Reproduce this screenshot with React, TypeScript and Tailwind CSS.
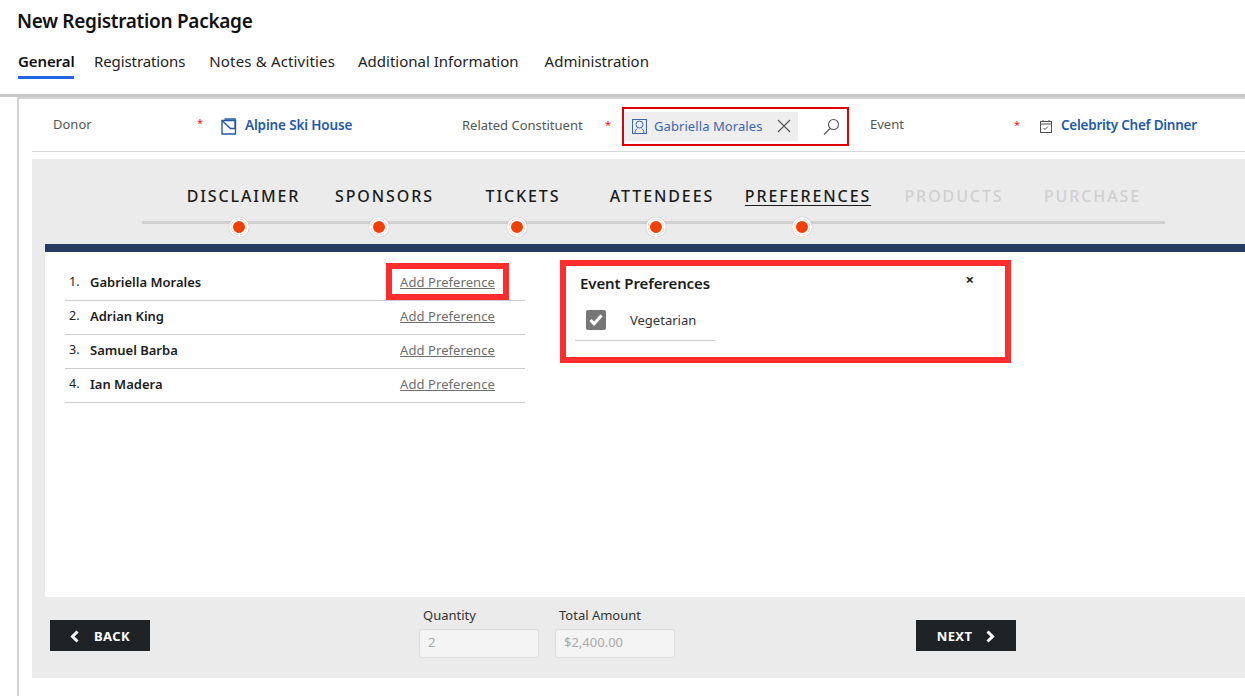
const steps = [
  { label: "DISCLAIMER", width: "w-[141px]", dotCls: "mr-[9px]", cls: "text-[#1c1c1c]" },
  { label: "SPONSORS", width: "w-[141px]", dotCls: "mr-[11px]", cls: "text-[#1c1c1c]" },
  { label: "TICKETS", width: "w-[136px]", dotCls: "mr-[12px]", cls: "text-[#1c1c1c]" },
  { label: "ATTENDEES", width: "w-[142px]", dotCls: "mr-[12px]", cls: "text-[#1c1c1c]" },
  { label: "PREFERENCES", width: "w-[150px]", dotCls: "mr-[12px]", cls: "text-[#1c1c1c] underline underline-offset-[3px]" },
  { label: "PRODUCTS", width: "w-[142px]", dotCls: "", cls: "text-[#d0d0d0] font-bold" },
  { label: "PURCHASE", width: "w-[135px]", dotCls: "", cls: "text-[#d0d0d0] font-bold" },
];

const attendees = ["Gabriella Morales", "Adrian King", "Samuel Barba", "Ian Madera"];

function AccountIcon() {
  return (
    <svg width="16" height="17" viewBox="0 0 16 17" fill="none" stroke="#2458a8" strokeWidth="1.4" className="shrink-0">
      <path d="M1 2.500h13.500v13.500h-13.500z" />
      <path d="M1 2.500l8.500 8h5" />
      <path d="M3.500 1h10.500v9.500" />
    </svg>
  );
}

function ContactIcon() {
  return (
    <svg width="15" height="15" viewBox="0 0 15 15" fill="none" stroke="#3a66ad" strokeWidth="1" className="shrink-0">
      <rect x="0.500" y="0.500" width="14" height="14" />
      <circle cx="7.500" cy="5.500" r="3.500" />
      <path d="M3 14.500c0-3 1.200-4.300 2.500-5.300M12 14.500c0-3-1.200-4.300-2.500-5.300" />
    </svg>
  );
}

function CalendarIcon() {
  return (
    <svg width="12" height="13" viewBox="0 0 12 13" fill="none" stroke="#505050" strokeWidth="1" className="shrink-0">
      <rect x="0.500" y="1.500" width="11" height="11" />
      <path d="M0.500 4h11M3 0v2M9 0v2" />
      <path d="M3.500 8l1.500 1.500 3-3" />
    </svg>
  );
}

function Chevron({ dir }: { dir: "left" | "right" }) {
  return (
    <svg width="9" height="13" viewBox="0 0 9 13" fill="none" stroke="#fff" strokeWidth="3">
      {dir === "left" ? <path d="M7.500 1.500L2.500 6.500l5 5" /> : <path d="M1.500 1.500l5 5-5 5" />}
    </svg>
  );
}

export default function App() {
  return (
    <div className="h-[696px] w-[1245px] overflow-hidden bg-white font-['Noto_Sans',sans-serif] text-[#222]">
      {/* header */}
      <div className="h-[97px] border-b-[3px] border-[#c8c8c8] pl-[17px]">
        <h1 className="pt-[8px] text-[19px] leading-[26px] font-semibold tracking-[-0.3px] text-[#111]">New Registration Package</h1>
        <div className="mt-[14px] ml-[1px] flex text-[15px] leading-[26px] text-[#222]">
          <div className="h-[31px] w-[56px] border-b-[3px] border-[#2266e3] font-semibold tracking-[-0.1px] text-[#111]">General</div>
          <div className="ml-[20px] tracking-[-0.1px]">Registrations</div>
          <div className="ml-[24px] tracking-[0.16px]">Notes &amp; Activities</div>
          <div className="ml-[23px]">Additional Information</div>
          <div className="ml-[26px]">Administration</div>
        </div>
      </div>

      {/* form area */}
      <div className="ml-[17px] h-[599px] border-t-2 border-l-2 border-[#d4d4d4]">
        <div className="ml-[13px] flex h-[53px] items-center border-b border-[#d8d8d8] pt-[2px] text-[13px]">
          <div className="flex w-[189px] pl-[21px]">
            <span className="w-[144px] text-[#555] -translate-y-[1px]">Donor</span>
            <span className="text-[11px] text-[#e81123] -translate-y-[1px]">*</span>
          </div>
          <div className="flex w-[241px] items-center gap-[8px]">
            <AccountIcon />
            <span className="text-[13.500px] font-semibold text-[#2458a8] tracking-[-0.15px] -translate-y-[1px]">Alpine Ski House</span>
          </div>
          <span className="w-[143px] text-[#555]">Related Constituent</span>
          <span className="w-[17px] text-[11px] text-[#e81123] -translate-y-[1px]">*</span>
          <div className="flex h-[39px] w-[227px] items-center border-2 border-[#e00000] pl-[1px]">
            <div className="flex h-[29px] w-[173px] items-center bg-[#eeeeee] pl-[7px] text-[#3a66ad]">
              <ContactIcon />
              <span className="ml-[7px] tracking-[0.08px] translate-y-[1px]">Gabriella Morales</span>
              <svg width="14" height="14" viewBox="0 0 14 14" stroke="#555" strokeWidth="1.100" className="ml-[14px]">
                <path d="M1 1l12 12M13 1L1 13" />
              </svg>
            </div>
            <svg width="17" height="17" viewBox="0 0 17 17" fill="none" stroke="#555" strokeWidth="1.100" className="ml-[25px]">
              <circle cx="10.500" cy="6.500" r="5" />
              <path d="M7 10.500L1 16.500" />
            </svg>
          </div>
          <span className="ml-[21px] w-[144px] text-[#555] -translate-y-[1px]">Event</span>
          <span className="w-[26px] text-[11px] text-[#e81123] -translate-y-[1px]">*</span>
          <CalendarIcon />
          <span className="ml-[9px] text-[13.500px] font-semibold text-[#2458a8] tracking-[-0.25px] -translate-y-[1px]">Celebrity Chef Dinner</span>
        </div>

        {/* wizard panel */}
        <div className="mt-[7px] ml-[13px] h-[519px] bg-[#ebebeb] pl-[13px]">
          <div className="relative h-[85px]">
            <div className="absolute top-[62px] left-[97px] h-[3px] w-[1023px] bg-[#d0d0d0]" />
            <div className="relative flex pl-[128px]">
              {steps.map((step) => (
                <div key={step.label} className={`flex flex-col items-center ${step.width}`}>
                  <span className={`mt-[26px] text-[16px] leading-[22px] font-medium tracking-[1.900px] whitespace-nowrap ${step.cls}`}>
                    {step.label}
                  </span>
                  {step.dotCls && (
                    <span className={`mt-[10px] flex h-[20px] w-[20px] items-center justify-center rounded-full border-2 border-white bg-[#f04008] shadow-[0_0_1px_#999] ring-2 ring-inset ring-white ${step.dotCls}`} />
                  )}
                </div>
              ))}
            </div>
          </div>
          <div className="h-[8px] bg-[#253a60]" />

          <div className="flex h-[345px] bg-white">
            {/* attendee list */}
            <div className="ml-[20px] w-[460px] pt-[15px]">
              {attendees.map((name, i) => (
                <div key={name} className="relative flex h-[34px] items-center border-b border-[#cccccc] pb-[2px] pl-[4px] text-[13px]">
                  <span className="w-[21px] text-[12.500px] text-[#222]">{i + 1}.</span>
                  <span className="font-semibold text-[#1c1c1c]">{name}</span>
                  <a className="absolute left-[335px] tracking-[0.08px] text-[#6e6e6e] underline">Add Preference</a>
                  {i === 0 && (
                    <div className="absolute -top-[4px] left-[321px] h-[37px] w-[123px] border-[6px] border-[#ff2d2d]" />
                  )}
                </div>
              ))}
            </div>

            {/* preferences popup */}
            <div className="mt-[8px] ml-[35px] h-[103px] w-[451px] border-[6px] border-[#ff2d2d] pl-[9px]">
              <div className="flex justify-between pr-[31px] pl-[5px]">
                <span className="pt-[5px] text-[15px] leading-[24px] font-semibold tracking-[-0.1px] text-[#1c1c1c]">Event Preferences</span>
                <span className="text-[15px] leading-[26px] font-bold text-[#222]">×</span>
              </div>
              <div className="flex h-[46px] w-[140px] items-center border-b border-[#cccccc] pt-[4px] pl-[11px] text-[13px]">
                <span className="flex h-[20px] w-[20px] items-center justify-center rounded-[2px] bg-[#777777]">
                  <svg width="14" height="12" viewBox="0 0 14 12" fill="none" stroke="#fff" strokeWidth="3">
                    <path d="M1.500 6l3.500 3.800L12.500 1.500" />
                  </svg>
                </span>
                <span className="ml-[24px] text-[#333] translate-y-[1px]">Vegetarian</span>
              </div>
            </div>
          </div>

          {/* footer */}
          <div className="flex h-[81px] pt-[23px]">
            <button className="ml-[5px] flex h-[31px] w-[100px] items-center justify-center gap-[15px] bg-[#1e2224] pt-[2px] text-[13px] font-bold tracking-[0.4px] text-white">
              <Chevron dir="left" />
              BACK
            </button>
            <div className="-mt-[14px] ml-[269px] w-[136px]">
              <div className="pl-[4px] text-[13px] leading-[18px] text-[#333]">Quantity</div>
              <div className="mt-[5px] flex h-[29px] w-[120px] items-center rounded-[3px] border border-[#dddddd] bg-[#f4f4f4] pb-[2px] pl-[8px] text-[13px] text-[#aaaaaa]">2</div>
            </div>
            <div className="-mt-[14px] w-[120px]">
              <div className="pl-[4px] text-[13px] leading-[18px] text-[#333]">Total Amount</div>
              <div className="mt-[5px] flex h-[29px] w-[120px] items-center rounded-[3px] border border-[#dddddd] bg-[#f4f4f4] pb-[2px] pl-[8px] text-[13px] text-[#aaaaaa]">$2,400.00</div>
            </div>
            <button className="ml-[241px] flex h-[31px] w-[100px] items-center justify-center gap-[14px] bg-[#1e2224] pt-[2px] text-[13px] font-bold tracking-[0.4px] text-white">
              NEXT
              <Chevron dir="right" />
            </button>
          </div>
        </div>
      </div>
    </div>
  );
}
